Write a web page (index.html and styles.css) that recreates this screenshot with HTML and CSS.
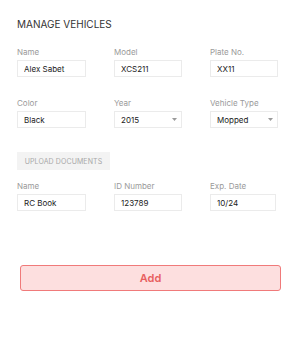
FILE: index.html
```html
<!DOCTYPE html>
<html lang="en">
<head>
    <meta charset="UTF-8">
    <meta name="viewport" content="width=device-width, initial-scale=1.0">
    <title>Manage Vehicles</title>
    <link rel="stylesheet" href="styles.css">
</head>
<body>
    <div class="page">
        <h2 class="title">MANAGE VEHICLES</h2>

        <div class="row">
            <div class="field">
                <label>Name</label>
                <input class="box" type="text" value="Alex Sabet">
            </div>
            <div class="field">
                <label>Model</label>
                <input class="box" type="text" value="XCS211">
            </div>
            <div class="field">
                <label>Plate No.</label>
                <input class="box" type="text" value="XX11">
            </div>
        </div>

        <div class="row row-second">
            <div class="field">
                <label>Color</label>
                <input class="box" type="text" value="Black">
            </div>
            <div class="field">
                <label>Year</label>
                <div class="box select">
                    <span>2015</span>
                    <svg class="caret" width="5" height="3" viewBox="0 0 5 3"><path d="M0 0h5L2.5 3z" fill="#9a9a9a"/></svg>
                </div>
            </div>
            <div class="field">
                <label>Vehicle Type</label>
                <div class="box select">
                    <span>Mopped</span>
                    <svg class="caret" width="5" height="3" viewBox="0 0 5 3"><path d="M0 0h5L2.5 3z" fill="#9a9a9a"/></svg>
                </div>
            </div>
        </div>

        <button class="upload-btn">UPLOAD DOCUMENTS</button>

        <div class="row row-docs">
            <div class="field">
                <label>Name</label>
                <input class="box" type="text" value="RC Book">
            </div>
            <div class="field">
                <label>ID Number</label>
                <input class="box" type="text" value="123789">
            </div>
            <div class="field">
                <label>Exp. Date</label>
                <input class="box box-narrow" type="text" value="10/24">
            </div>
        </div>

        <button class="add-btn">Add</button>
    </div>
</body>
</html>
```

FILE: styles.css
```css
* {
    margin: 0;
    padding: 0;
    box-sizing: border-box;
}

body {
    font-family: Inter, 'Noto Sans', sans-serif;
    background: #fff;
    color: #222;
}

.page {
    padding: 18px 17px 0 17px;
}

.title {
    font-size: 10px;
    line-height: 12px;
    font-weight: 400;
    color: #333;
}

.row {
    display: grid;
    grid-template-columns: 69px 68px 68px;
    column-gap: 28px;
    margin-top: 17px;
}

.row-second {
    margin-top: 21px;
}

.row-docs {
    margin-top: 11px;
}

.field label {
    display: block;
    font-size: 8px;
    line-height: 10px;
    color: #9a9a9a;
    margin-bottom: 3px;
}

.box {
    display: block;
    width: 100%;
    height: 17px;
    border: 1px solid #ebebeb;
    background: #fff;
    padding: 0 6px;
    font-family: inherit;
    font-size: 8px;
    color: #222;
    outline: none;
}

.box-narrow {
    width: 66px;
}

.select {
    display: flex;
    align-items: center;
    justify-content: space-between;
    padding-right: 4px;
}

.caret {
    display: block;
}

.upload-btn {
    display: block;
    margin-top: 24px;
    height: 18px;
    width: 93px;
    border: none;
    background: #f3f3f3;
    color: #a8a8a8;
    font-family: inherit;
    font-size: 7px;
    letter-spacing: 0.1px;
}

.add-btn {
    display: block;
    margin: 54px 0 0 3px;
    width: 261px;
    height: 26px;
    border: 1px solid #f07a7a;
    border-radius: 3px;
    background: #fddfdf;
    color: #e85f5f;
    font-family: inherit;
    font-size: 11px;
    font-weight: 600;
}
```
